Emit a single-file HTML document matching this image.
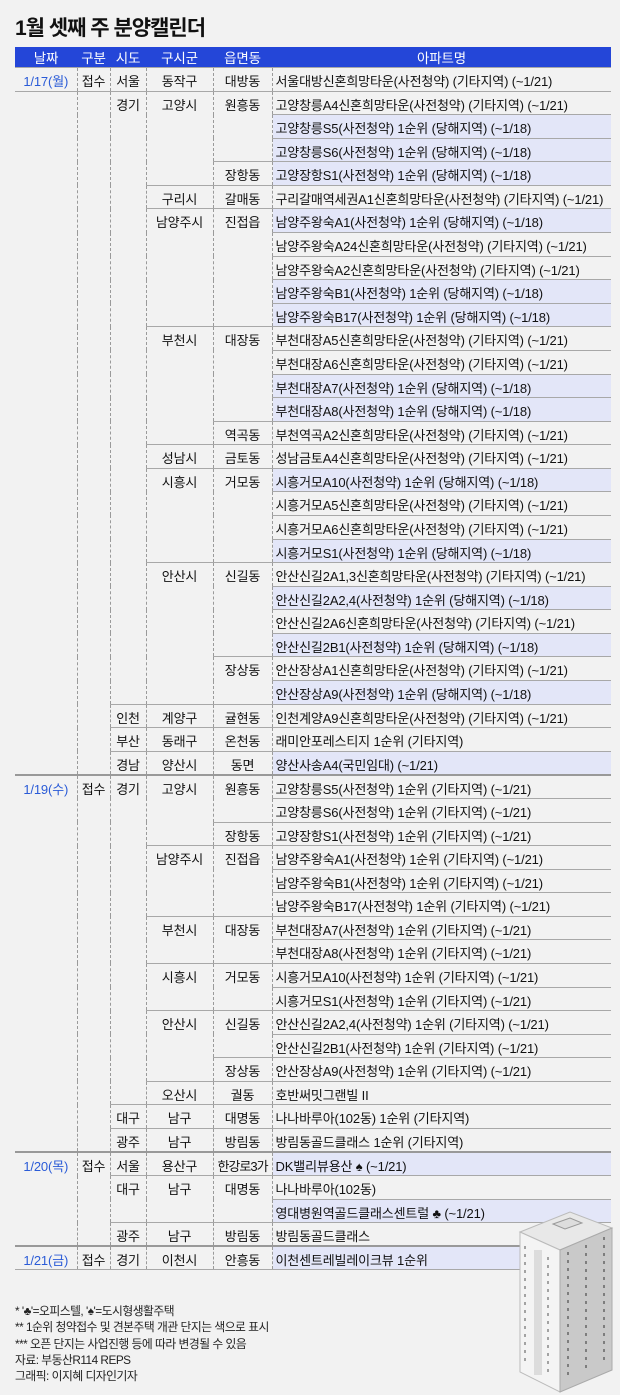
<!DOCTYPE html>
<html><head><meta charset="utf-8">
<style>
*{margin:0;padding:0;box-sizing:border-box}
body{width:620px;height:1395px;background:#f2f2f2;font-family:"Liberation Sans","Noto Sans CJK KR",sans-serif;position:relative;overflow:hidden;color:#111}
h1{position:absolute;left:15px;top:12px;font-size:21px;font-weight:bold;letter-spacing:-1px}
table{position:absolute;left:15px;top:47px;width:596px;border-collapse:collapse;table-layout:fixed;font-size:13px;letter-spacing:-0.15px}
th{background:#2446d8;color:#fff;font-weight:normal;height:20px;text-align:center;font-size:13.5px}
td{height:23.58px;border:1px dashed #9a9a9a;border-top:1px solid #a8a8a8;border-bottom:1px solid #a8a8a8;text-align:center;vertical-align:top;padding-top:3px;white-space:nowrap;overflow:hidden}
td.a{text-align:left;padding-left:3px;border-right:none}
td.h{background:#e3e6f8}
td.d{color:#2a5bd7}
tr.g td{border-top:2px solid #999}
tr td:first-child{border-left:none}
.notes{position:absolute;left:15px;top:1303px;font-size:11.8px;line-height:16.3px;letter-spacing:-0.5px;color:#222}
svg{position:absolute;left:0;top:0}
</style></head><body>
<h1>1월 셋째 주 분양캘린더</h1>
<table>
<colgroup><col style="width:62px"><col style="width:33px"><col style="width:36px"><col style="width:67px"><col style="width:59px"><col style="width:339px"></colgroup>
<tr><th>날짜</th><th>구분</th><th>시도</th><th>구시군</th><th>읍면동</th><th>아파트명</th></tr>
<tr><td class="d">1/17(월)</td><td>접수</td><td>서울</td><td>동작구</td><td>대방동</td><td class="a">서울대방신혼희망타운(사전청약) (기타지역) (~1/21)</td></tr>
<tr><td rowspan="29"></td><td rowspan="29"></td><td rowspan="26">경기</td><td rowspan="4">고양시</td><td rowspan="3">원흥동</td><td class="a">고양창릉A4신혼희망타운(사전청약) (기타지역) (~1/21)</td></tr>
<tr><td class="a h">고양창릉S5(사전청약) 1순위 (당해지역) (~1/18)</td></tr>
<tr><td class="a h">고양창릉S6(사전청약) 1순위 (당해지역) (~1/18)</td></tr>
<tr><td>장항동</td><td class="a h">고양장항S1(사전청약) 1순위 (당해지역) (~1/18)</td></tr>
<tr><td>구리시</td><td>갈매동</td><td class="a">구리갈매역세권A1신혼희망타운(사전청약) (기타지역) (~1/21)</td></tr>
<tr><td rowspan="5">남양주시</td><td rowspan="5">진접읍</td><td class="a h">남양주왕숙A1(사전청약) 1순위 (당해지역) (~1/18)</td></tr>
<tr><td class="a">남양주왕숙A24신혼희망타운(사전청약) (기타지역) (~1/21)</td></tr>
<tr><td class="a">남양주왕숙A2신혼희망타운(사전청약) (기타지역) (~1/21)</td></tr>
<tr><td class="a h">남양주왕숙B1(사전청약) 1순위 (당해지역) (~1/18)</td></tr>
<tr><td class="a h">남양주왕숙B17(사전청약) 1순위 (당해지역) (~1/18)</td></tr>
<tr><td rowspan="5">부천시</td><td rowspan="4">대장동</td><td class="a">부천대장A5신혼희망타운(사전청약) (기타지역) (~1/21)</td></tr>
<tr><td class="a">부천대장A6신혼희망타운(사전청약) (기타지역) (~1/21)</td></tr>
<tr><td class="a h">부천대장A7(사전청약) 1순위 (당해지역) (~1/18)</td></tr>
<tr><td class="a h">부천대장A8(사전청약) 1순위 (당해지역) (~1/18)</td></tr>
<tr><td>역곡동</td><td class="a">부천역곡A2신혼희망타운(사전청약) (기타지역) (~1/21)</td></tr>
<tr><td>성남시</td><td>금토동</td><td class="a">성남금토A4신혼희망타운(사전청약) (기타지역) (~1/21)</td></tr>
<tr><td rowspan="4">시흥시</td><td rowspan="4">거모동</td><td class="a h">시흥거모A10(사전청약) 1순위 (당해지역) (~1/18)</td></tr>
<tr><td class="a">시흥거모A5신혼희망타운(사전청약) (기타지역) (~1/21)</td></tr>
<tr><td class="a">시흥거모A6신혼희망타운(사전청약) (기타지역) (~1/21)</td></tr>
<tr><td class="a h">시흥거모S1(사전청약) 1순위 (당해지역) (~1/18)</td></tr>
<tr><td rowspan="6">안산시</td><td rowspan="4">신길동</td><td class="a">안산신길2A1,3신혼희망타운(사전청약) (기타지역) (~1/21)</td></tr>
<tr><td class="a h">안산신길2A2,4(사전청약) 1순위 (당해지역) (~1/18)</td></tr>
<tr><td class="a">안산신길2A6신혼희망타운(사전청약) (기타지역) (~1/21)</td></tr>
<tr><td class="a h">안산신길2B1(사전청약) 1순위 (당해지역) (~1/18)</td></tr>
<tr><td rowspan="2">장상동</td><td class="a">안산장상A1신혼희망타운(사전청약) (기타지역) (~1/21)</td></tr>
<tr><td class="a h">안산장상A9(사전청약) 1순위 (당해지역) (~1/18)</td></tr>
<tr><td>인천</td><td>계양구</td><td>귤현동</td><td class="a">인천계양A9신혼희망타운(사전청약) (기타지역) (~1/21)</td></tr>
<tr><td>부산</td><td>동래구</td><td>온천동</td><td class="a">래미안포레스티지 1순위 (기타지역)</td></tr>
<tr><td>경남</td><td>양산시</td><td>동면</td><td class="a h">양산사송A4(국민임대) (~1/21)</td></tr>
<tr class="g"><td class="d" rowspan="16">1/19(수)</td><td rowspan="16">접수</td><td rowspan="14">경기</td><td rowspan="3">고양시</td><td rowspan="2">원흥동</td><td class="a">고양창릉S5(사전청약) 1순위 (기타지역) (~1/21)</td></tr>
<tr><td class="a">고양창릉S6(사전청약) 1순위 (기타지역) (~1/21)</td></tr>
<tr><td>장항동</td><td class="a">고양장항S1(사전청약) 1순위 (기타지역) (~1/21)</td></tr>
<tr><td rowspan="3">남양주시</td><td rowspan="3">진접읍</td><td class="a">남양주왕숙A1(사전청약) 1순위 (기타지역) (~1/21)</td></tr>
<tr><td class="a">남양주왕숙B1(사전청약) 1순위 (기타지역) (~1/21)</td></tr>
<tr><td class="a">남양주왕숙B17(사전청약) 1순위 (기타지역) (~1/21)</td></tr>
<tr><td rowspan="2">부천시</td><td rowspan="2">대장동</td><td class="a">부천대장A7(사전청약) 1순위 (기타지역) (~1/21)</td></tr>
<tr><td class="a">부천대장A8(사전청약) 1순위 (기타지역) (~1/21)</td></tr>
<tr><td rowspan="2">시흥시</td><td rowspan="2">거모동</td><td class="a">시흥거모A10(사전청약) 1순위 (기타지역) (~1/21)</td></tr>
<tr><td class="a">시흥거모S1(사전청약) 1순위 (기타지역) (~1/21)</td></tr>
<tr><td rowspan="3">안산시</td><td rowspan="2">신길동</td><td class="a">안산신길2A2,4(사전청약) 1순위 (기타지역) (~1/21)</td></tr>
<tr><td class="a">안산신길2B1(사전청약) 1순위 (기타지역) (~1/21)</td></tr>
<tr><td>장상동</td><td class="a">안산장상A9(사전청약) 1순위 (기타지역) (~1/21)</td></tr>
<tr><td>오산시</td><td>궐동</td><td class="a">호반써밋그랜빌 II</td></tr>
<tr><td>대구</td><td>남구</td><td>대명동</td><td class="a">나나바루아(102동) 1순위 (기타지역)</td></tr>
<tr><td>광주</td><td>남구</td><td>방림동</td><td class="a">방림동골드클래스 1순위 (기타지역)</td></tr>
<tr class="g"><td class="d" rowspan="4">1/20(목)</td><td rowspan="4">접수</td><td>서울</td><td>용산구</td><td style="letter-spacing:-1px">한강로3가</td><td class="a h">DK밸리뷰용산 ♠ (~1/21)</td></tr>
<tr><td rowspan="2">대구</td><td rowspan="2">남구</td><td rowspan="2">대명동</td><td class="a">나나바루아(102동)</td></tr>
<tr><td class="a h">영대병원역골드클래스센트럴 ♣ (~1/21)</td></tr>
<tr><td>광주</td><td>남구</td><td>방림동</td><td class="a">방림동골드클래스</td></tr>
<tr class="g"><td class="d">1/21(금)</td><td>접수</td><td>경기</td><td>이천시</td><td>안흥동</td><td class="a h">이천센트레빌레이크뷰 1순위</td></tr>
</table>
<svg width="620" height="1395" viewBox="0 0 620 1395">
<polygon points="520,1232 570,1212 612,1228 560,1250" fill="#e8e8e8" stroke="#bbb"/>
<polygon points="553,1224 570,1218 582,1223 565,1229" fill="#ddd" stroke="#999"/>
<polygon points="520,1232 560,1250 560,1392 520,1372" fill="#f4f4f4" stroke="#bbb"/>
<polygon points="560,1250 612,1228 612,1370 560,1392" fill="#c9c9c9" stroke="#aaa"/>
<g stroke="#888" stroke-width="1.5">
<line x1="525" y1="1246" x2="525" y2="1362" stroke-dasharray="3,5"/>
<line x1="548" y1="1257" x2="548" y2="1375" stroke-dasharray="3,5"/>
<line x1="568" y1="1252" x2="568" y2="1380" stroke-dasharray="3,5" stroke="#666"/>
<line x1="586" y1="1245" x2="586" y2="1372" stroke-dasharray="3,5" stroke="#666"/>
<line x1="604" y1="1237" x2="604" y2="1364" stroke-dasharray="3,5" stroke="#666"/>
</g>
<rect x="534" y="1250" width="8" height="125" fill="#dcdcdc"/>
</svg>
<div class="notes">* '♣'=오피스텔, '♠'=도시형생활주택<br>** 1순위 청약접수 및 견본주택 개관 단지는 색으로 표시<br>*** 오픈 단지는 사업진행 등에 따라 변경될 수 있음<br>자료: 부동산R114 REPS<br>그래픽: 이지혜 디자인기자</div>
</body></html>
